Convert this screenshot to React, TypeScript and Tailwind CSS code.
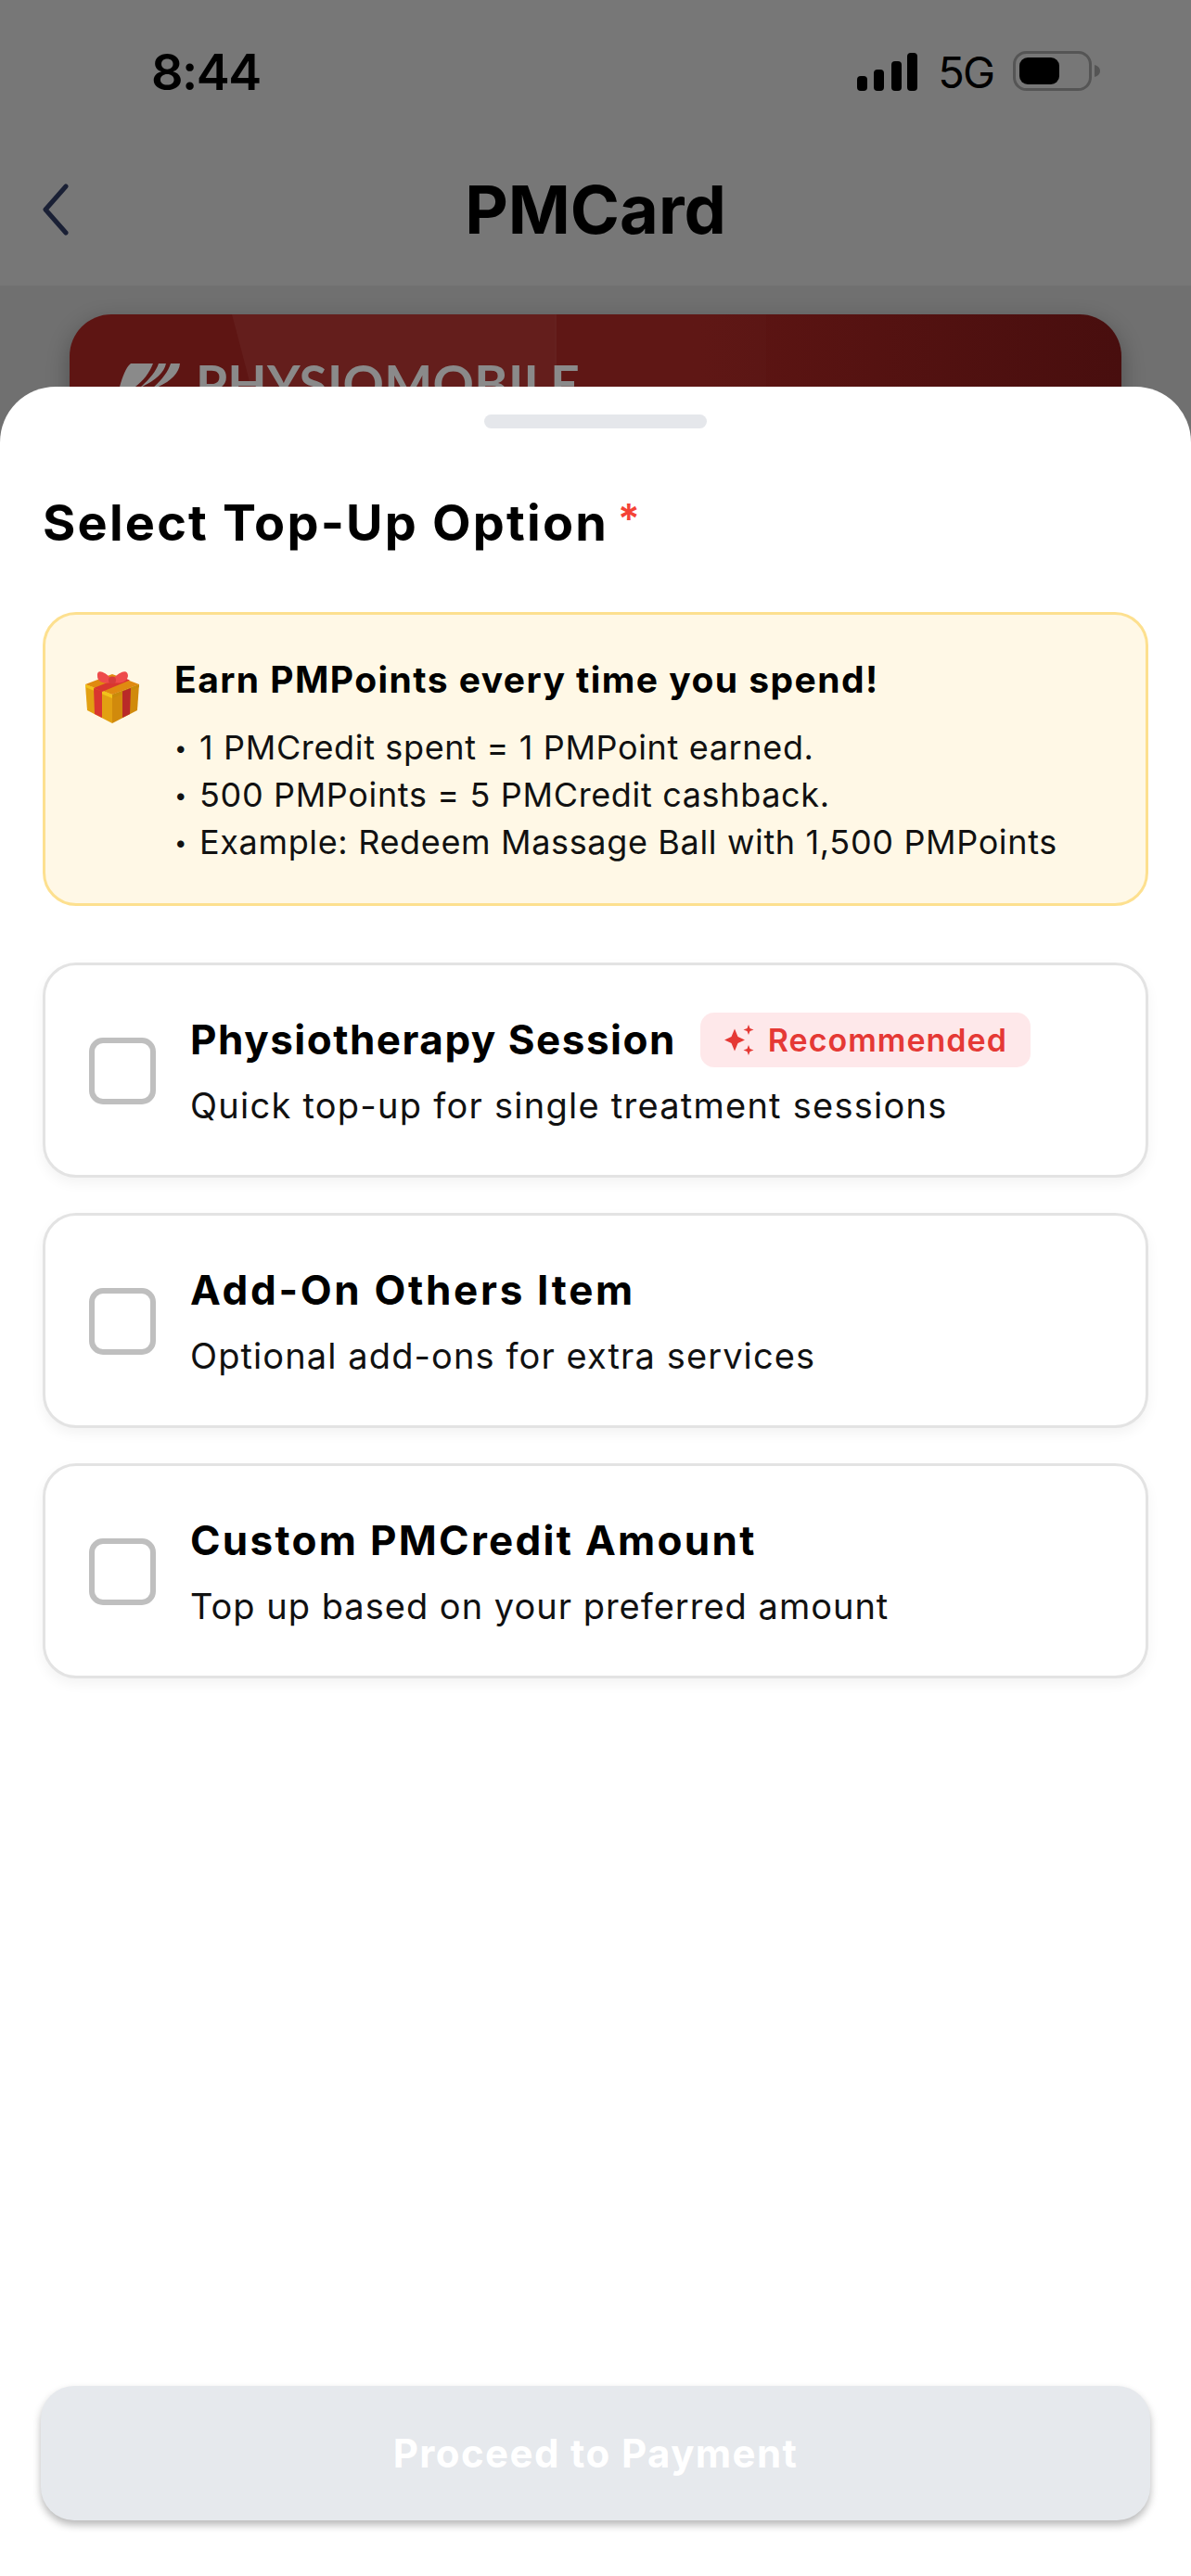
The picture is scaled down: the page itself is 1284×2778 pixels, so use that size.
import React from 'react';

const heading = "font-['Inter',sans-serif]";

const options = [
  { title: 'Physiotherapy Session', desc: 'Quick top-up for single treatment sessions', recommended: true, spacing: 'tracking-[1.5px]', descSpacing: 'tracking-[1.25px]' },
  { title: 'Add-On Others Item', desc: 'Optional add-ons for extra services', recommended: false, spacing: 'tracking-[2.7px]', descSpacing: 'tracking-[1.1px]' },
  { title: 'Custom PMCredit Amount', desc: 'Top up based on your preferred amount', recommended: false, spacing: 'tracking-[2.3px]', descSpacing: 'tracking-[1px]' },
];

const earnLines = [
  '1 PMCredit spent = 1 PMPoint earned.',
  '500 PMPoints = 5 PMCredit cashback.',
  'Example: Redeem Massage Ball with 1,500 PMPoints',
];

function StatusIcons() {
  return (
    <div className="flex items-end">
      <svg width="65" height="41" viewBox="0 0 65 41" fill="#000">
        <rect x="0" y="25" width="11" height="16" rx="4" />
        <rect x="18" y="18" width="11" height="23" rx="4" />
        <rect x="37" y="9" width="11" height="32" rx="4" />
        <rect x="54" y="0" width="11" height="41" rx="4" />
      </svg>
      <span className="ml-[22px] text-[47px] leading-[41px] font-['Inter',sans-serif] text-black tracking-[-2px]">5G</span>
      <svg className="ml-[21px]" width="95" height="43" viewBox="0 0 95 43">
        <rect x="1.5" y="1.5" width="82" height="40" rx="13" fill="none" stroke="#555" strokeWidth="3" />
        <rect x="7" y="7" width="43" height="29" rx="9" fill="#000" />
        <path d="M88 15c4 1 6 3.500 6 6.500s-2 5.500-6 6.500z" fill="#555" />
      </svg>
    </div>
  );
}

function GiftIcon() {
  return (
    <svg width="60" height="60" viewBox="0 0 60 60" className="mt-[10px] shrink-0">
      <path d="M1 17 L30 28 L30 59 L3 45 Z" fill="#e2a012" />
      <path d="M59 17 L30 28 L30 59 L57 45 Z" fill="#d18a0c" />
      <path d="M1 17 L30 6 L59 17 L30 28 Z" fill="#e08a10" />
      <path d="M1 17 L30 28 L30 32 L1 20 Z" fill="#f2c21a" />
      <path d="M59 17 L30 28 L30 32 L59 20 Z" fill="#c98a0a" />
      <path d="M10 21 L19 24.500 L19 53 L11 49 Z" fill="#d9362f" />
      <path d="M50 21 L41 24.500 L41 53 L49 49 Z" fill="#b92a28" />
      <path d="M10 21 L40 9 L49 12.500 L19 25 Z" fill="#d9362f" />
      <path d="M30 12 C20 1 13 1 14 8 C14 14 20 17 30 15 C40 17 46 14 47 8 C47 1 40 1 30 12 Z" fill="#ee4b4b" />
      <ellipse cx="30" cy="12.500" rx="4" ry="4" fill="#d63b3b" />
    </svg>
  );
}

function SparkleIcon() {
  return (
    <svg width="32" height="33" viewBox="0 0 32 33" fill="#e53935" className="shrink-0">
      <path d="M11 4.500 L14.500 13 L22 16.500 L14.500 20 L11 28.500 L7.500 20 L0 16.500 L7.500 13 Z" />
      <path d="M26 0 L27.500 4 L31.500 5.500 L27.500 7 L26 11 L24.500 7 L20.500 5.500 L24.500 4 Z" />
      <path d="M26 22 L27.500 26 L31.500 27.500 L27.500 29 L26 33 L24.500 29 L20.500 27.500 L24.500 26 Z" />
    </svg>
  );
}

function OptionCard({ title, desc, recommended, spacing, descSpacing }: { title: string; desc: string; recommended: boolean; spacing: string; descSpacing: string }) {
  return (
    <div className="flex h-[232px] items-center rounded-[36px] border-[3px] border-[#e3e3e3] bg-white pl-[47px] shadow-[0_6px_14px_rgba(0,0,0,0.05)]">
      <div className="mt-[2px] h-[72px] w-[72px] shrink-0 rounded-[15px] border-[6px] border-[#bfbfbf] bg-white" />
      <div className="ml-[37px] flex flex-col">
        <div className="flex h-[59px] items-center">
          <span className={`${heading} ${spacing} text-[44px] leading-[59px] font-bold text-black`}>{title}</span>
          {recommended && (
            <span className="ml-[26px] flex h-[59px] w-[356px] items-center rounded-[15px] bg-[#fee8ea] pl-[26px]">
              <SparkleIcon />
              <span className={`${heading} ml-[15px] text-[34px] font-semibold tracking-[1px] text-[#e53935]`}>Recommended</span>
            </span>
          )}
        </div>
        <p className={`${descSpacing} mt-[16px] font-['Inter',sans-serif] text-[38px] leading-[50px] text-[#111]`}>{desc}</p>
      </div>
    </div>
  );
}

export default function App() {
  return (
    <div className="flex h-[2778px] w-[1284px] flex-col overflow-hidden bg-[#707070]">
      <div className="h-[308px] shrink-0 bg-[#777777]">
        <div className="flex items-end justify-between pl-[163px] pr-[97px] pt-[55px]">
          <span className="font-['Inter',sans-serif] text-[54px] leading-[41px] font-semibold tracking-[-1.5px] text-black">8:44</span>
          <StatusIcons />
        </div>
        <div className="mt-[100px] grid grid-cols-[1fr_auto_1fr] items-center pl-[45px]">
          <svg width="30" height="56" viewBox="0 0 30 56" fill="none" stroke="#1a2035" strokeWidth="5" strokeLinecap="round" strokeLinejoin="round">
            <path d="M26 3 L4 28 L26 53" />
          </svg>
          <span className={`${heading} pr-[45px] text-[72px] leading-[56px] font-bold text-black`}>PMCard</span>
        </div>
      </div>

      <div className="h-[109px] shrink-0 overflow-hidden px-[75px] pt-[31px]">
        <div className="relative h-[200px] overflow-hidden rounded-[45px] bg-gradient-to-r from-[#5e1513] from-60% to-[#480e0e] shadow-[0_8px_24px_rgba(0,0,0,0.3)]">
          <div className="absolute left-[175px] top-0 h-[200px] w-[350px] bg-white opacity-[0.04] [clip-path:polygon(0_0,100%_0,100%_100%,15%_100%)]" />
          <div className="absolute left-[523px] top-0 h-[200px] w-[228px] bg-white opacity-[0.012]" />
          <div className="relative flex items-start pl-[54px] pt-[53px]">
            <svg width="66" height="60" viewBox="0 0 66 60" fill="#8a8a8a">
              <path d="M12 0 L36 0 C32 10 26 18 17 25 L0 25 C3 15 6 5 12 0 Z" />
              <path d="M42 0 L50 0 C48 10 38 19 22 26 C32 17 39 9 42 0 Z" />
              <path d="M55 0 L65 0 C64 12 52 22 34 28 C44 19 52 10 55 0 Z" />
            </svg>
            <span className="ml-[16px] font-['Lato',sans-serif] text-[55px] leading-[42px] font-bold tracking-[0.3px] text-[#8a8a8a]">PHYSIOMOBILE</span>
          </div>
        </div>
      </div>

      <div className="flex flex-1 flex-col rounded-t-[60px] bg-white px-[46px] pb-[60px]">
        <div className="mt-[30px] h-[15px] w-[240px] self-center rounded-full bg-[#e5e7eb]" />

        <div className="mt-[67px] flex items-start">
          <h2 className={`${heading} text-[54px] leading-[70px] font-bold tracking-[2.2px] text-black`}>Select Top-Up Option</h2>
          <span className={`${heading} ml-[10px] mt-[2px] text-[44px] leading-[56px] font-semibold text-[#f44336]`}>*</span>
        </div>

        <div className="mt-[61px] flex h-[317px] rounded-[36px] border-[3px] border-[#fde08f] bg-[#fff8e6] pl-[42px] pt-[48px]">
          <GiftIcon />
          <div className="ml-[37px] flex flex-col">
            <p className={`${heading} text-[39px] leading-[44px] font-bold tracking-[1.45px] text-black`}>Earn PMPoints every time you spend!</p>
            <ul className="mt-[26px] flex flex-col">
              {earnLines.map((line) => (
                <li key={line} className="flex font-['Inter',sans-serif] text-[36px] leading-[51px] tracking-[0.65px] text-[#111]">
                  <span className="w-[27px] shrink-0 text-[24px]">•</span>
                  {line}
                </li>
              ))}
            </ul>
          </div>
        </div>

        <div className="mt-[61px] flex flex-col gap-[38px]">
          {options.map((o) => (
            <OptionCard key={o.title} title={o.title} desc={o.desc} recommended={o.recommended} spacing={o.spacing} descSpacing={o.descSpacing} />
          ))}
        </div>

        <button className={`${heading} mt-auto h-[145px] w-[1196px] self-center rounded-[36px] bg-[#e6e9ed] text-[42px] font-bold tracking-[1.4px] text-white shadow-[0_5px_9px_rgba(0,0,0,0.28)]`}>
          Proceed to Payment
        </button>
      </div>
    </div>
  );
}
